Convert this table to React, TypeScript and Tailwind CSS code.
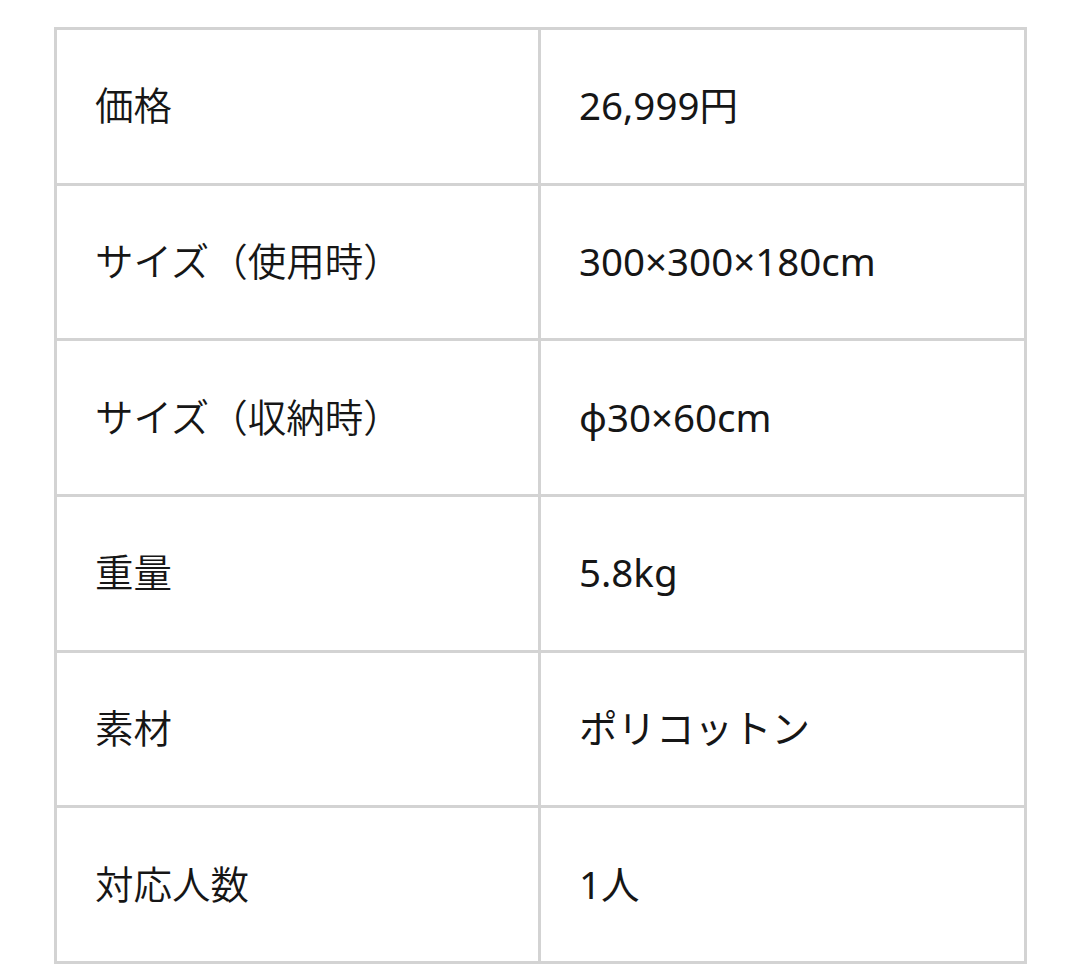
const rows: [string, string][] = [
  ["価格", "26,999円"],
  ["サイズ（使用時）", "300×300×180cm"],
  ["サイズ（収納時）", "φ30×60cm"],
  ["重量", "5.8kg"],
  ["素材", "ポリコットン"],
  ["対応人数", "1人"],
];

export default function App() {
  return (
    <div className="w-[1080px] h-[974px] bg-white pt-[27px] pl-[54px] overflow-hidden">
      <div
        className="grid grid-cols-[484px_486px] w-[973px] border-t-[3px] border-l-[3px] border-[#d3d3d3] text-[38.5px] text-[#161616]"
        style={{ fontFamily: '"Noto Sans", "Noto Sans CJK JP", sans-serif' }}
      >
        {rows.map(([label, value]) => (
          <div key={label} className="contents">
            <div className="h-[155.67px] flex items-center pl-[38px] border-r-[3px] border-b-[3px] border-[#d3d3d3] font-light">
              <span className="[font-weight:350]">{label}</span>
            </div>
            <div className="h-[155.67px] flex items-center pl-[38px] border-r-[3px] border-b-[3px] border-[#d3d3d3]">
              {value}
            </div>
          </div>
        ))}
      </div>
    </div>
  );
}
